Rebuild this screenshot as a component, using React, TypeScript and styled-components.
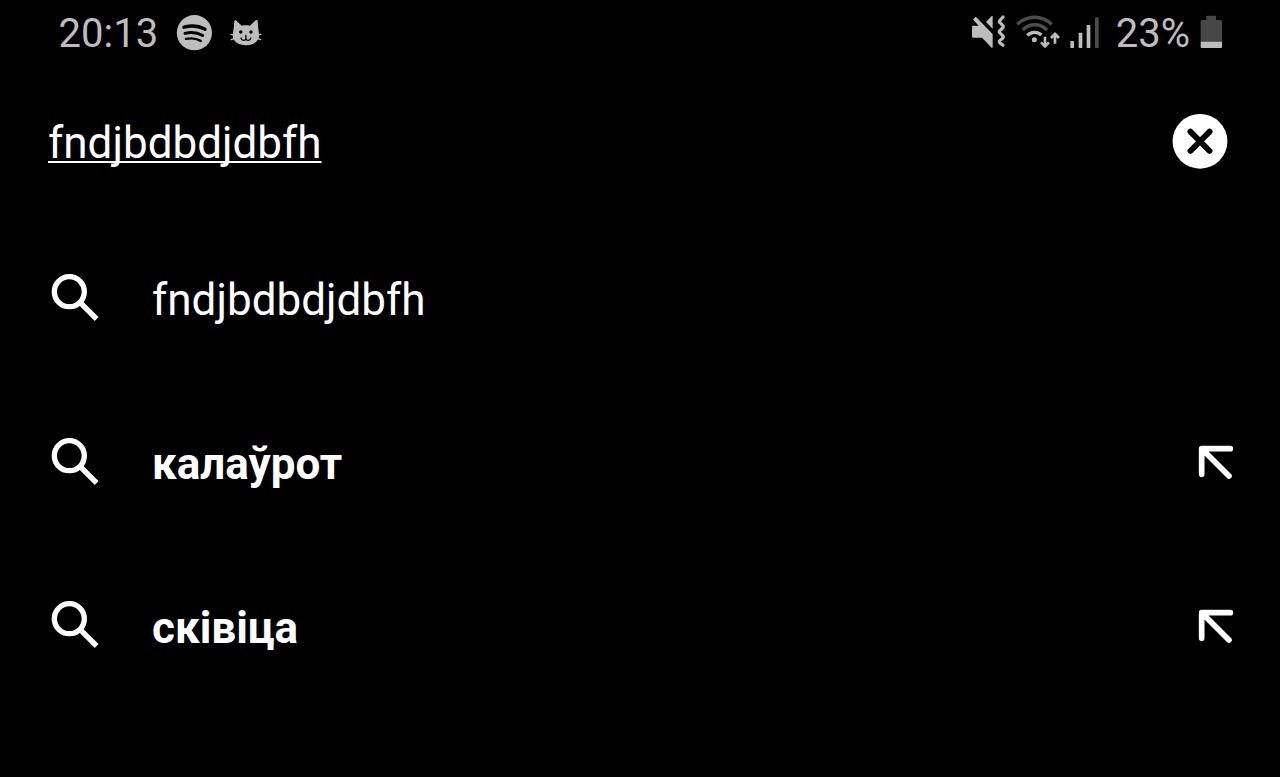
import { FC } from 'react';
import styled, { createGlobalStyle } from 'styled-components';

const GlobalStyle = createGlobalStyle`
   body {
      margin: 0;
      background: #000;
      font-family: Roboto, "Noto Sans", sans-serif;
   }
`;

const Screen = styled.main`
   display: flex;
   flex-direction: column;
   box-sizing: border-box;
   height: 777px;
   background: #000;
   color: #fff;
   overflow: hidden;
`;

const StatusBar = styled.header`
   display: flex;
   justify-content: space-between;
   height: 68px;
   padding: 0 57px 0 58.5px;
   box-sizing: border-box;
   color: #bdbdbd;
`;

const StatusGroup = styled.div`
   display: flex;
   align-items: flex-start;
`;

const StatusText = styled.span<{ $left?: number }>`
   font-size: 40px;
   line-height: 48px;
   margin-top: 10px;
   margin-left: ${({ $left }) => $left || 0}px;
   white-space: nowrap;
`;

const Icon = styled.svg<{ $top?: number; $left?: number }>`
   display: block;
   flex: none;
   margin-top: ${({ $top }) => $top || 0}px;
   margin-left: ${({ $left }) => $left || 0}px;
`;

const SearchBar = styled.div`
   display: flex;
   align-items: center;
   justify-content: space-between;
   height: 146px;
   padding: 0 52px 0 48px;
   box-sizing: border-box;
`;

const Query = styled.span`
   padding-top: 3px;
   font-size: 44px;
   line-height: 52px;
   text-decoration: underline;
   text-decoration-thickness: 2px;
   text-decoration-skip-ink: none;
   text-underline-offset: 3px;
`;

const Button = styled.button`
   display: block;
   padding: 0;
   border: 0;
   background: none;
   color: inherit;
`;

const Suggestions = styled.ul`
   margin: 0;
   padding: 1px 0 0;
   list-style: none;
`;

const Suggestion = styled.li`
   display: flex;
   align-items: center;
   height: 163.7px;
   padding: 0 46px 0 50px;
   box-sizing: border-box;
`;

const Label = styled.span<{ $bold?: boolean }>`
   flex: 1;
   margin-left: 52px;
   padding-top: 7px;
   font-size: 44px;
   line-height: 52px;
   font-weight: ${({ $bold }) => ($bold ? 700 : 400)};
`;

const MusicIcon: FC = () => (
   <Icon $top={14} $left={18} width="38" height="38" viewBox="0 0 38 38" fill="none" stroke="#000" strokeLinecap="round">
      <circle cx="18.4" cy="18.7" r="17.6" fill="#bdbdbd" stroke="none" />
      <path d="M8 13.2c6.8-1.8 15-1.2 21 2" strokeWidth="3.4" />
      <path d="M9 19.4c6-1.5 12.5-.8 17.7 2.2" strokeWidth="2.9" />
      <path d="M10 24.9c5-1 10.3-.5 14.7 2" strokeWidth="2.4" />
   </Icon>
);

const CatIcon: FC = () => (
   <Icon $top={18} $left={16} width="34" height="30" viewBox="0 0 34 30" fill="none" stroke="#bdbdbd" strokeLinecap="round">
      <path
         d="M4.3 3.6c.1-1.3 1.2-1.7 2.2-.8l5.2 4.9c2.6-.6 5.6-.6 8.2 0l5.5-5.1c1-.9 2.2-.5 2.3.8.3 3.5.4 7 1 10.6.5 2.8.6 5.600-.9 7.800-2.200 3.500-6.600 5.400-12.100 5.400S6 25.300 3.900 21.800c-1.400-2.200-1.300-5-.8-7.800.7-3.600.9-7 1.200-10.400z"
         fill="#bdbdbd"
         stroke="none"
      />
      <path d="M.9 16.300l3.500.8M1.200 21.600l4-1.300M31 16.300l-3.500.8M30.700 21.600l-4-1.300" strokeWidth="1.3" />
      <circle cx="10.8" cy="14" r="1.7" fill="#000" stroke="none" />
      <circle cx="21" cy="14" r="1.7" fill="#000" stroke="none" />
      <path d="M15.900 17.500v3M11 20c.4 3 4.300 3.200 4.900.6.600 2.600 4.500 2.400 4.900-.6" stroke="#000" strokeWidth="1.3" />
   </Icon>
);

const VibrateIcon: FC = () => (
   <Icon $top={14} width="36" height="36" viewBox="30 27 108 108" fill="#bdbdbd">
      <path d="M36 65q0-3 3-3h17L40 45q-1-1 0-2l5-6q2-2 4 0l49 50v41h-3L66 98H39q-3 0-3-3zM78 51l17-18h3v38z" />
      <path d="M129 36l-9 10q-4 4 0 7l8 8q4 4 0 8l-8 7q-4 4 0 8l8 8q4 4 0 8l-8 6q-4 4 0 8l9 7" fill="none" stroke="#bdbdbd" strokeWidth="9.5" strokeLinecap="round" />
   </Icon>
);

const WifiIcon: FC = () => (
   <Icon $top={14} $left={9} width="45" height="36" viewBox="165 27 135 108" fill="none" stroke="#bdbdbd">
      <path d="M172 58a73 73 0 0 1 103 0M188 75a50 50 0 0 1 73 0" stroke="#4c4c4c" strokeWidth="10" />
      <path d="M202 91a30 30 0 0 1 42-1" strokeWidth="10" />
      <circle cx="223" cy="104" r="7.5" fill="#bdbdbd" stroke="none" />
      <path d="M255 95v28M243 112l12 12 12-12M285 116V88M273 99l12-12 12 12" strokeWidth="8" />
   </Icon>
);

const SignalIcon: FC = () => (
   <Icon $top={14} $left={10} width="30" height="36" viewBox="330 27 90 108" fill="#bdbdbd">
      <rect x="331" y="108" width="11" height="21" rx="2" />
      <rect x="356" y="83" width="11" height="46" rx="2" />
      <rect x="380" y="60" width="11" height="69" rx="2" />
      <rect x="405" y="37" width="11" height="92" rx="2" fill="#4c4c4c" />
   </Icon>
);

const BatteryIcon: FC = () => (
   <Icon $top={14} $left={10} width="23" height="36" viewBox="300 27 69 108" fill="#464646">
      <path d="M319 34q0-2 2-2h25q2 0 2 2v11h14q4 0 4 4v62h-64V49q0-4 4-4h13z" />
      <path d="M302 110h64v16q0 3-3 3h-58q-3 0-3-3z" fill="#bdbdbd" />
   </Icon>
);

const ClearIcon: FC = () => (
   <Icon width="56" height="56" viewBox="-28 -28.3 56 56">
      <circle r="27.4" fill="#fff" />
      <path d="M-9.6-9.7L9.6 9.7M9.6-9.7L-9.6 9.7" stroke="#000" strokeWidth="5.8" strokeLinecap="round" />
   </Icon>
);

const SearchIcon: FC = () => (
   <Icon width="50" height="50" viewBox="30 36 150 150" fill="none" stroke="#fff">
      <circle cx="88" cy="95" r="45" strokeWidth="16" />
      <path d="M120 127l50 50" strokeWidth="16" />
   </Icon>
);

const InsertIcon: FC = () => (
   <Icon $top={3} width="38" height="36" viewBox="48 42 114 108" fill="none" stroke="#fff" strokeWidth="17" strokeLinecap="round" strokeLinejoin="round">
      <path d="M65 133V56h86M66 57l81 81" />
   </Icon>
);

const suggestions = [
   { text: 'fndjbdbdjdbfh', typed: true },
   { text: 'калаўрот', typed: false },
   { text: 'сківіца', typed: false },
];

const App: FC = () => (
   <Screen>
      <GlobalStyle />

      <StatusBar>
         <StatusGroup>
            <StatusText>20:13</StatusText>
            <MusicIcon />
            <CatIcon />
         </StatusGroup>
         <StatusGroup>
            <VibrateIcon />
            <WifiIcon />
            <SignalIcon />
            <StatusText $left={16}>23%</StatusText>
            <BatteryIcon />
         </StatusGroup>
      </StatusBar>

      <SearchBar>
         <Query>fndjbdbdjdbfh</Query>
         <Button aria-label="Clear">
            <ClearIcon />
         </Button>
      </SearchBar>

      <Suggestions>
         {suggestions.map(({ text, typed }) => (
            <Suggestion key={text}>
               <SearchIcon />
               <Label $bold={!typed}>{text}</Label>
               {!typed && (
                  <Button aria-label="Insert">
                     <InsertIcon />
                  </Button>
               )}
            </Suggestion>
         ))}
      </Suggestions>
   </Screen>
);

export default App;
